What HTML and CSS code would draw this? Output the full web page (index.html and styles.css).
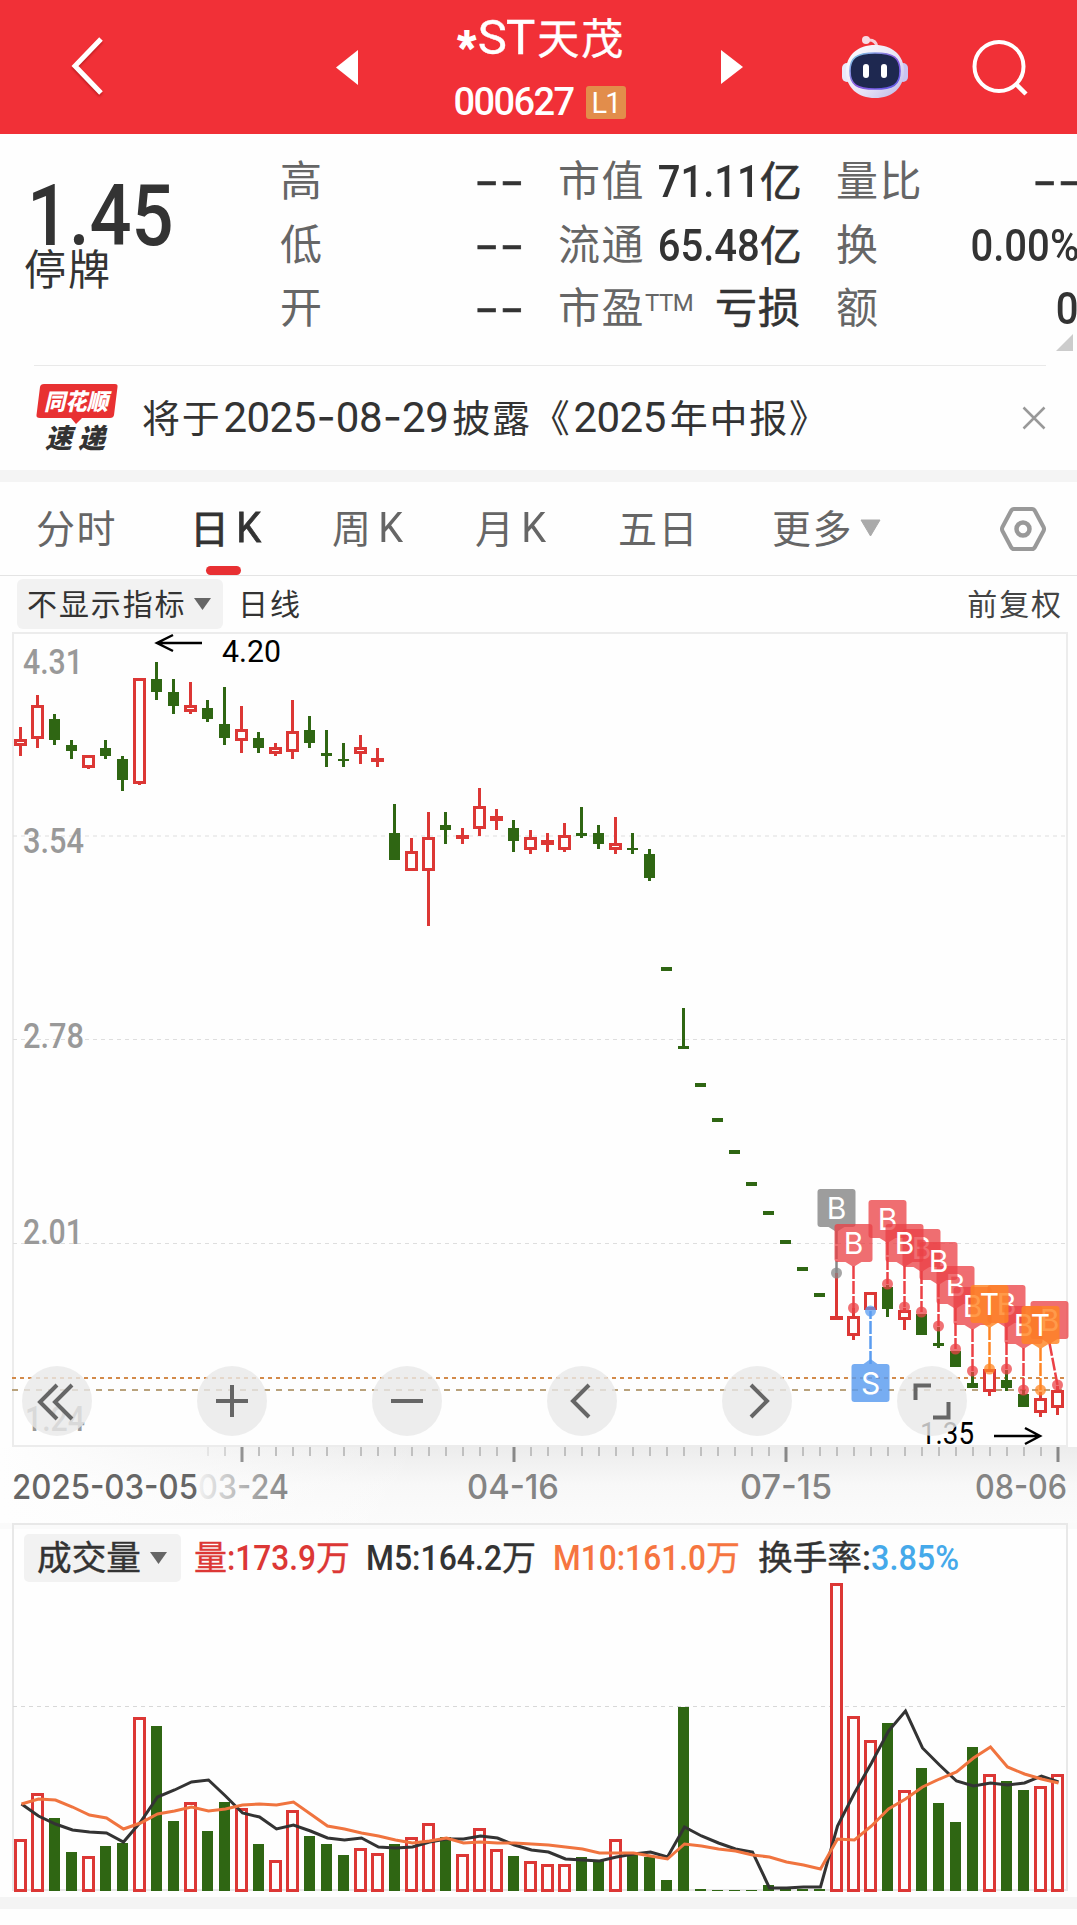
FILE: index.html
```html
<!DOCTYPE html>
<html lang="zh-CN">

<head>
    <meta charset="UTF-8">
    <meta name="viewport" content="width=device-width, initial-scale=1.0">
    <title>*ST天茂 000627</title>
    <link rel="stylesheet" href="styles.css">
</head>

<body>
    <header class="topbar">
        <svg class="back" width="34" height="62" viewBox="0 0 34 62">
            <path d="M31 3 L5 30 L31 57" fill="none" stroke="#fff" stroke-width="5" />
        </svg>
        <svg class="prev" width="22" height="36" viewBox="0 0 22 36">
            <path d="M22 0 V35 L0 17.5Z" fill="#fff" />
        </svg>
        <div class="title">
            <h1><span class="star">*</span><span class="st">ST</span>天茂</h1>
            <div class="code"><span>000627</span><b>L1</b></div>
        </div>
        <svg class="next" width="22" height="36" viewBox="0 0 22 36">
            <path d="M0 0 V34 L22 17Z" fill="#fff" />
        </svg>
        <svg class="robot" width="68" height="64" viewBox="0 0 68 64">
            <defs>
                <linearGradient id="shell" x1="0" y1="0" x2="1" y2="1">
                    <stop offset="0" stop-color="#ffffff" />
                    <stop offset=".6" stop-color="#e6e2f5" />
                    <stop offset="1" stop-color="#b9b4e4" />
                </linearGradient>
                <linearGradient id="rim" x1="0" y1="0" x2="1" y2="1">
                    <stop offset="0" stop-color="#7fd6e6" />
                    <stop offset=".5" stop-color="#8d5be0" />
                    <stop offset="1" stop-color="#5a5be8" />
                </linearGradient>
            </defs>
            <path d="M25 5 Q34 4 35 12" fill="none" stroke="#f6cfd8" stroke-width="3" />
            <circle cx="24" cy="5" r="4" fill="#f8dbe4" />
            <rect x="0" y="28" width="10" height="19" rx="5" fill="#e9e9fa" />
            <rect x="56" y="28" width="10" height="19" rx="5" fill="#c9c5f0" />
            <path d="M33 10 C50 10 62 20 62 36 C62 53 50 63 33 63 C16 63 4 53 4 36 C4 20 16 10 33 10Z" fill="url(#shell)" />
            <path d="M33 18 C52 18 58 23 58 36 C58 50 51 54 33 54 C15 54 8 50 8 36 C8 23 14 18 33 18Z" fill="#1e2850" stroke="url(#rim)" stroke-width="1.6" />
            <rect x="21" y="29" width="6" height="14" rx="3" fill="#fff" />
            <rect x="39" y="29" width="6" height="14" rx="3" fill="#fff" />
        </svg>
        <svg class="search" width="58" height="60" viewBox="0 0 58 60">
            <circle cx="27" cy="27.500" r="24.5" fill="none" stroke="#fff" stroke-width="4" />
            <path d="M44 45 L54 55" stroke="#fff" stroke-width="4.5" />
        </svg>
    </header>

    <section class="quote">
        <div class="price">
            <div class="now"><span>1.45</span></div>
            <div class="state">停牌</div>
        </div>
        <div class="cell c1"><span>高</span><b class="dash">--</b></div>
        <div class="cell c2"><span>市值</span><b><i>71.11</i>亿</b></div>
        <div class="cell c3"><span>量比</span><b class="dash">--</b></div>
        <div class="cell c1"><span>低</span><b class="dash">--</b></div>
        <div class="cell c2"><span>流通</span><b><i>65.48</i>亿</b></div>
        <div class="cell c3"><span>换</span><b><i>0.00%</i></b></div>
        <div class="cell c1"><span>开</span><b class="dash">--</b></div>
        <div class="cell c2"><span>市盈<sup>TTM</sup></span><b class="loss">亏损</b></div>
        <div class="cell c3"><span>额</span><b><i>0</i></b></div>
    </section>

    <section class="notice">
        <svg class="logo" width="84" height="70" viewBox="0 0 84 70">
            <path d="M8 1 H79 Q82 1 81.500 4 L78 32 Q77.500 35 74 35 H46 L40 41 L35 35 H4 Q0 35 .5 32 L4 4 Q4.500 1 8 1Z" fill="#e83132" />
            <text class="logo-a" x="8" y="27" textLength="64" lengthAdjust="spacingAndGlyphs">同花顺</text>
            <text class="logo-b" x="9" y="65" textLength="60">速递</text>
        </svg>
        <p>将于<span class="num">2025<i>-</i>08<i>-</i>29</span>披露《<span class="num">2025</span>年中报》</p>
        <svg class="close" width="24" height="24" viewBox="0 0 24 24">
            <path d="M1.500 1.500 L22.500 22.500 M22.500 1.500 L1.500 22.500" stroke="#999" stroke-width="2.500" />
        </svg>
    </section>

    <nav class="tabs">
        <a>分时</a>
        <a class="active">日<span>K</span></a>
        <a>周<span>K</span></a>
        <a>月<span>K</span></a>
        <a>五日</a>
        <a>更多<svg width="21" height="18" viewBox="0 0 21 18"><path d="M1 1 H20 L10.500 17Z" fill="#aaa" stroke="#aaa" stroke-linejoin="round" /></svg></a>
        <svg class="setting" width="46" height="46" viewBox="0 0 46 46">
            <path d="M14 3 H32 Q34 3 35 5 L43.500 21 Q44.500 23 43.500 25 L35 41 Q34 43 32 43 H14 Q12 43 11 41 L2.500 25 Q1.500 23 2.500 21 L11 5 Q12 3 14 3Z" fill="none" stroke="#999" stroke-width="4" />
            <circle cx="23" cy="23" r="6.500" fill="none" stroke="#999" stroke-width="4.500" />
        </svg>
    </nav>

    <div class="indicator">
        <div class="chip"><span>不显示指标</span><svg width="17" height="12" viewBox="0 0 17 12"><path d="M0 0 H17 L8.500 12Z" fill="#666" /></svg></div>
        <span class="period">日线</span>
        <span class="adjust">前复权</span>
    </div>

    <section class="kline">
        <svg id="kline" width="1077" height="891" viewBox="0 632 1077 891"></svg>
        <div class="tools">
            <button><svg viewBox="0 0 70 70"><path d="M35 19 L18 36 L35 53 M50 19 L33 36 L50 53" /></svg></button>
            <button><svg viewBox="0 0 70 70"><path d="M35 19 V51 M19 35 H51" /></svg></button>
            <button><svg viewBox="0 0 70 70"><path d="M19 35 H51" /></svg></button>
            <button><svg viewBox="0 0 70 70"><path d="M42 19 L26 35 L42 51" /></svg></button>
            <button><svg viewBox="0 0 70 70"><path d="M29 19 L45 35 L29 51" /></svg></button>
            <button><svg viewBox="0 0 70 70"><path d="M18.500 34 V19.500 H34 M36 51.500 H51.500 V36" /></svg></button>
        </div>
    </section>

    <section class="volume">
        <svg id="volume" width="1077" height="374" viewBox="0 1523 1077 374"></svg>
    </section>
    <div class="band"></div>

    <script src="script.js"></script>
</body>

</html>
```
FILE: styles.css
```css
* {
    box-sizing: border-box;
    margin: 0;
    padding: 0;
}

body {
    width: 1077px;
    height: 1925px;
    background-color: #fefefe;
    color: #333;
    font-family: Roboto, "Noto Sans CJK SC", sans-serif;
    overflow: hidden;
}

svg {
    display: block;
    flex-shrink: 0;
}

i {
    font-style: normal;
}

/* red title bar */
.topbar {
    display: flex;
    align-items: flex-start;
    height: 134px;
    background-color: #f13037;
    color: white;
    padding-left: 70px;
}

.back {
    margin-top: 36px;
    filter: drop-shadow(0 2px 1px rgba(120, 0, 0, 0.4));
}

.prev {
    margin: 50px 0 0 232px;
}

.title {
    width: 363px;
    text-align: center;
}

.title h1 {
    height: 78px;
    padding-left: 4px;
    font-size: 42px;
    line-height: 76px;
    font-weight: 400;
    letter-spacing: 2px;
    white-space: nowrap;
    -webkit-text-stroke: 0.4px white;
}

.title .star {
    font-size: 42px;
    position: relative;
    top: 7px;
    -webkit-text-stroke: 2px white;
}

.title .st {
    font-size: 49px;
    letter-spacing: -1px;
    margin-right: 3px;
}

.code {
    display: flex;
    justify-content: center;
    align-items: center;
    height: 48px;
    gap: 12px;
    font-size: 38px;
    font-weight: 500;
}

.code span {
    letter-spacing: -1.600px;
}

.code b {
    width: 40px;
    height: 33px;
    border-radius: 3px;
    background-color: #e28d4b;
    font-size: 29px;
    line-height: 34px;
    font-weight: 400;
    letter-spacing: -2px;
}

.next {
    margin-top: 50px;
}

.robot {
    margin: 35px 0 0 99px;
}

.search {
    margin: 39px 0 0 62px;
}

/* quote numbers */
.quote {
    position: relative;
    display: grid;
    grid-template-columns: 280px 241px 280px 276px;
    grid-template-rows: repeat(3, 63.500px);
    height: 232px;
    padding-top: 16px;
    font-size: 42px;
    line-height: 63px;
}

.quote::before {
    content: "";
    position: absolute;
    left: 34px;
    right: 31px;
    bottom: 0;
    height: 1px;
    background-color: #e9e9e9;
}

.quote::after {
    content: "";
    position: absolute;
    right: 4px;
    top: 200px;
    border-left: 17px solid transparent;
    border-bottom: 17px solid #ccc;
}

.price {
    grid-row: 1 / 4;
    padding: 20px 0 0 24px;
}

.now {
    height: 76px;
    font-size: 86px;
    line-height: 92px;
    font-weight: 500;
    padding-left: 3px;
}

.now span {
    display: inline-block;
    transform: scaleX(0.86);
    transform-origin: left;
}

.state {
    line-height: 49px;
    letter-spacing: 2px;
}

.cell {
    display: flex;
    justify-content: space-between;
    white-space: nowrap;
}

.c2 {
    padding-left: 37px;
}

.c3 {
    padding-left: 35px;
    margin-right: -2px;
}

.cell span {
    color: #666;
    letter-spacing: 1.500px;
}

.cell b {
    font-weight: 400;
    -webkit-text-stroke: 0.6px #333;
}

.cell i {
    display: inline-block;
    font-size: 45px;
    font-weight: 500;
    transform: scaleX(0.89);
    transform-origin: right;
    -webkit-text-stroke: 0;
}

.cell .dash {
    font-family: Inter, sans-serif;
    font-size: 44px;
    transform: translateX(3px) scaleX(1.25);
    transform-origin: right;
}

.cell .loss {
    letter-spacing: 1px;
}

.cell sup {
    font-size: 24px;
    line-height: 1;
    letter-spacing: -0.500px;
    vertical-align: 12px;
}

/* news line */
.notice {
    display: flex;
    align-items: center;
    height: 104px;
    padding: 0 31px 0 36px;
}

.logo-a {
    fill: white;
    font: italic 900 23px "Noto Sans CJK SC", sans-serif;
}

.logo-b {
    fill: #333;
    font: italic 900 27px "Noto Sans CJK SC", sans-serif;
}

.notice p {
    flex: 1;
    margin: -6px 0 0 22px;
    font-size: 38px;
    letter-spacing: 1.700px;
    white-space: nowrap;
}

.num {
    font-size: 42px;
    letter-spacing: -0.500px;
    margin: 0 4px 0 2px;
}

.num i {
    display: inline-block;
    width: 20px;
    text-align: center;
    font-family: Inter, sans-serif;
}

.tabs {
    display: grid;
    grid-template-columns: 154px 142px 143px 143px 154px 228px 46px;
    align-items: center;
    height: 106px;
    padding-left: 36px;
    border-top: 12px solid #f4f4f4;
    border-bottom: 1px solid #e4e4e4;
    font-size: 39px;
    color: #666;
}

.tabs a {
    position: relative;
    display: flex;
    align-items: center;
    letter-spacing: 1.500px;
    padding-bottom: 6px;
}

.tabs a span {
    margin: 2px 0 0 4px;
    font-size: 43px;
    transform: scaleX(0.92);
}

.tabs a svg {
    margin: 4px 0 0 7px;
}

.tabs .active {
    color: #333;
    -webkit-text-stroke: 0.8px #333;
}

.tabs .active::after {
    content: "";
    position: absolute;
    left: 16px;
    bottom: -15px;
    width: 35px;
    height: 9px;
    border-radius: 5px;
    background-color: #e83033;
}

.indicator {
    display: flex;
    align-items: center;
    height: 56px;
    padding: 0 14px 0 17px;
    font-size: 30px;
    letter-spacing: 1.900px;
}

.indicator span {
    padding-bottom: 5px;
}

.chip {
    display: flex;
    align-items: center;
    justify-content: space-between;
    width: 206px;
    height: 50px;
    padding: 0 12px 0 10px;
    border-radius: 6px;
    background-color: #f2f2f2;
}

.period {
    margin-left: 15px;
}

.adjust {
    margin-left: auto;
    color: #444;
}

/* charts */
.kline {
    position: relative;
    height: 891px;
}

.tools {
    position: absolute;
    left: 22px;
    top: 734px;
    display: flex;
    gap: 105px;
}

.tools button {
    width: 70px;
    height: 70px;
    border: none;
    border-radius: 50%;
    background-color: rgba(233, 233, 233, 0.8);
}

.tools path {
    fill: none;
    stroke: #666;
    stroke-width: 4;
}

.ylabel {
    font: 500 35px Roboto, sans-serif;
    fill: #999;
}

.mark {
    font: 32px Roboto, sans-serif;
    fill: black;
}

.date {
    font: 500 34px Inter, sans-serif;
    fill: #848484;
}

.date.first {
    fill: #666;
}

.tag {
    font: 30px Inter, sans-serif;
    fill: white;
    text-anchor: middle;
}

.legend {
    font: 500 35px Roboto, sans-serif;
}

.legend.cn {
    font: 34px "Noto Sans CJK SC", sans-serif;
    stroke-width: 0.4px;
}

.volume {
    height: 374px;
}

.band {
    height: 12px;
    background-color: #f4f4f4;
}
```
FILE: script.js
```
var RED = '#dc3735';
var GREEN = '#2f6613';

// [up, high, bodyTop, bodyBottom, low, volumeTop, m5, m10]
var days = [
    [1, 727, 739, 746, 756, 1839, 1804, 1804],
    [1, 695, 705, 739, 748, 1793, 1816, 1799],
    [0, 714, 719, 740, 745, 1818, 1824, 1800],
    [0, 740, 745, 751, 759, 1852, 1830, 1807],
    [1, 755, 755, 768, 769, 1856, 1832, 1815],
    [0, 740, 748, 756, 759, 1846, 1833, 1818],
    [0, 756, 759, 780, 791, 1843, 1842, 1829],
    [1, 678, 678, 784, 785, 1717, 1822, 1823],
    [0, 662, 679, 692, 700, 1726, 1797, 1814],
    [0, 679, 692, 706, 714, 1821, 1790, 1811],
    [1, 682, 705, 712, 714, 1802, 1782, 1807],
    [0, 700, 708, 719, 722, 1831, 1780, 1811],
    [0, 687, 724, 738, 745, 1802, 1796, 1809],
    [1, 706, 729, 741, 753, 1808, 1813, 1805],
    [0, 732, 738, 748, 753, 1844, 1817, 1804],
    [1, 743, 747, 754, 756, 1860, 1829, 1805],
    [1, 700, 731, 752, 759, 1810, 1825, 1802],
    [0, 716, 730, 743, 748, 1836, 1831, 1814],
    [0, 730, 753, 756, 767, 1844, 1838, 1826],
    [0, 743, 759, 761, 767, 1855, 1840, 1829],
    [1, 735, 747, 754, 764, 1848, 1838, 1833],
    [1, 748, 758, 762, 767, 1853, 1847, 1836],
    [0, 804, 833, 860, 860, 1844, 1848, 1840],
    [1, 838, 851, 871, 871, 1837, 1847, 1843],
    [1, 812, 837, 871, 926, 1823, 1842, 1841],
    [0, 812, 825, 830, 844, 1837, 1839, 1838],
    [1, 828, 835, 839, 844, 1854, 1839, 1843],
    [1, 788, 806, 829, 836, 1828, 1836, 1842],
    [1, 809, 816, 821, 830, 1849, 1838, 1843],
    [0, 820, 828, 841, 852, 1856, 1845, 1843],
    [1, 830, 837, 850, 854, 1861, 1850, 1844],
    [1, 833, 840, 845, 852, 1864, 1852, 1845],
    [1, 823, 835, 850, 852, 1864, 1859, 1847],
    [0, 807, 833, 836, 838, 1857, 1860, 1849],
    [0, 825, 833, 844, 849, 1861, 1861, 1853],
    [1, 817, 843, 850, 854, 1839, 1857, 1853],
    [0, 833, 848, 850, 854, 1853, 1854, 1853],
    [0, 849, 854, 878, 881, 1857, 1852, 1856],
    [0, 967, 967, 971, 971, 1880, 1857, 1859],
    [0, 1008, 1046, 1049, 1049, 1707, 1827, 1844],
    [0, 1083, 1083, 1087, 1087, 1889, 1836, 1846],
    [0, 1118, 1118, 1122, 1122, 1890, 1843, 1849],
    [0, 1150, 1150, 1154, 1154, 1890, 1849, 1851],
    [0, 1182, 1182, 1186, 1186, 1890, 1852, 1855],
    [0, 1211, 1211, 1215, 1215, 1885, 1888, 1857],
    [0, 1240, 1240, 1244, 1244, 1889, 1888, 1862],
    [0, 1267, 1267, 1271, 1271, 1889, 1887, 1865],
    [0, 1293, 1293, 1297, 1297, 1889, 1887, 1869],
    [1, 1273, 1316, 1320, 1320, 1583, 1826, 1839],
    [1, 1308, 1316, 1336, 1340, 1716, 1793, 1840],
    [1, 1292, 1292, 1310, 1310, 1740, 1763, 1826],
    [0, 1285, 1287, 1309, 1317, 1723, 1731, 1809],
    [1, 1308, 1310, 1320, 1330, 1790, 1711, 1799],
    [0, 1314, 1314, 1335, 1335, 1768, 1748, 1787],
    [0, 1327, 1343, 1346, 1348, 1803, 1765, 1779],
    [0, 1351, 1351, 1367, 1367, 1822, 1781, 1772],
    [0, 1372, 1383, 1388, 1388, 1747, 1786, 1758],
    [1, 1369, 1369, 1392, 1396, 1774, 1783, 1747],
    [0, 1370, 1380, 1388, 1391, 1781, 1785, 1767],
    [0, 1390, 1394, 1407, 1407, 1790, 1783, 1774],
    [1, 1392, 1398, 1413, 1417, 1786, 1776, 1779],
    [1, 1386, 1390, 1408, 1415, 1774, 1782, 1783]
];

// trade tags: [day, letter, boxTop, dotY, color], lower ones first
var tags = [
    [48, 'B', 1189, 1273, '#888888'],
    [58, 'B', 1285, 1369, '#eb4146'],
    [61, 'B', 1301, 1385, '#eb4146'],
    [53, 'B', 1229, 1312, '#eb4146'],
    [51, 'B', 1200, 1284, '#eb4146'],
    [49, 'B', 1224, 1308, '#eb4146'],
    [55, 'B', 1266, 1349, '#eb4146'],
    [56, 'B', 1287, 1371, '#eb4146'],
    [59, 'B', 1306, 1390, '#eb4146'],
    [52, 'B', 1224, 1307, '#eb4146'],
    [54, 'B', 1242, 1326, '#eb4146'],
    [57, 'T', 1285, 1369, '#ff8523'],
    [60, 'T', 1306, 1390, '#ff8523'],
    [50, 'S', 1364, 1311, '#5a9cf0']
];

function cx(i) {
    return 20.5 + 17 * i;
}

function rect(x, y, w, h, fill, more) {
    return '<rect x="' + x + '" y="' + y + '" width="' + w + '" height="' + h + '" fill="' + fill + '" ' + (more || '') + '/>';
}

function line(x1, y1, x2, y2, color, width, more) {
    return '<line x1="' + x1 + '" y1="' + y1 + '" x2="' + x2 + '" y2="' + y2 + '" stroke="' + color + '" stroke-width="' + width + '" ' + (more || '') + '/>';
}

function text(x, y, cls, str, width, more) {
    return '<text x="' + x + '" y="' + y + '" class="' + cls + '" ' +
        (width ? 'textLength="' + width + '" lengthAdjust="spacingAndGlyphs" ' : '') + (more || '') + '>' + str + '</text>';
}

function hollow(x, top, bottom) {
    return '<rect x="' + (x - 5) + '" y="' + (top + 1.5) + '" width="10" height="' + Math.max(bottom - top - 3, 1) +
        '" fill="#fefefe" stroke="' + RED + '" stroke-width="3"/>';
}

function drawKline() {
    var s = '';

    // date axis background
    s += '<defs><linearGradient id="axis" x1="0" y1="0" x2="0" y2="1"><stop offset="0" stop-color="#ececec"/>' +
        '<stop offset=".5" stop-color="#f8f8f8"/><stop offset="1" stop-color="#fbfbfb"/></linearGradient>' +
        '<linearGradient id="fade" x1="0" y1="0" x2="1" y2="0"><stop offset="0" stop-color="#fefefe"/>' +
        '<stop offset="1" stop-color="#fefefe" stop-opacity="0"/></linearGradient>' +
        '<linearGradient id="fadeText" x1="0" y1="0" x2="1" y2="0"><stop offset="0" stop-color="#f2f2f2"/>' +
        '<stop offset=".6" stop-color="#a8a8a8"/><stop offset="1" stop-color="#848484"/></linearGradient></defs>';
    s += rect(0, 1447, 1077, 76, 'url(#axis)');
    s += rect(0, 1447, 420, 76, 'url(#fade)');
    for (var i = 0; i <= 50; i++) {
        var tx = 208 + 17 * i;
        var major = (i - 2) % 16 === 0;
        s += line(tx, 1447, tx, major ? 1462 : 1456, major ? '#888' : '#c0c0c0', major ? 3 : 2, i < 3 ? 'opacity="' + (0.3 + i * 0.3) + '"' : '');
    }

    // frame and grid
    s += '<rect x="13" y="633" width="1054" height="813" fill="none" stroke="#ececec" stroke-width="2"/>';
    [836, 1039.5, 1243.5].forEach(function (y) {
        s += line(13, y, 1067, y, '#dedede', 1, 'stroke-dasharray="4 4"');
    });
    s += line(12, 1378, 1067, 1378, '#d38a4a', 2, 'stroke-dasharray="4 4"');
    s += line(12, 1390, 1067, 1390, '#b9a27c', 2, 'stroke-dasharray="6 6"');
    s += text(23, 674, 'ylabel', '4.31', 60);
    s += text(23, 853, 'ylabel', '3.54', 61);
    s += text(23, 1048, 'ylabel', '2.78', 61);
    s += text(23, 1244, 'ylabel', '2.01', 60);
    s += text(25, 1431, 'ylabel', '1.24', 60);

    days.forEach(function (d, n) {
        var x = cx(n);
        s += rect(x - 1.5, d[1], 3, d[4] - d[1], d[0] ? RED : GREEN);
        s += d[0] ? hollow(x, d[2], d[3]) : rect(x - 5.5, d[2], 11, d[3] - d[2], GREEN);
    });

    // high and low marks
    s += '<path d="M202 643 H157 M173 635 L157 643 L173 651" fill="none" stroke="#000" stroke-width="2.500"/>';
    s += text(222, 662, 'mark', '4.20', 59);
    s += text(920, 1444, 'mark', '1.35', 54);
    s += '<path d="M994 1436 H1040 M1025 1428 L1040 1436 L1025 1444" fill="none" stroke="#000" stroke-width="2.500"/>';

    // stems first so the boxes cover them
    tags.forEach(function (t) {
        var x = cx(t[0]);
        var start = t[1] === 'S' ? t[2] : t[2] + 42;
        s += line(t[0] === 61 ? x - 8 : x, start, x, t[3], t[4], 2.5, 'stroke-dasharray="13 2"');
        s += '<circle cx="' + x + '" cy="' + t[3] + '" r="5.500" fill="' + t[4] + '" opacity=".75"/>';
    });
    tags.forEach(function (t) {
        var x = cx(t[0]) - (t[0] === 61 ? 8 : 0);
        var y = t[2];
        s += '<g opacity="' + (t[1] === 'B' && t[0] !== 48 ? 0.76 : 0.82) + '">' + rect(x - 19, y, 38, 38, t[4], 'rx="3"');
        s += t[1] === 'S'
            ? '<path d="M' + (x - 7) + ' ' + y + ' L' + x + ' ' + (y - 5) + ' L' + (x + 7) + ' ' + y + 'Z" fill="' + t[4] + '"/>'
            : '<path d="M' + (x - 8) + ' ' + (y + 38) + ' L' + x + ' ' + (y + 43) + ' L' + (x + 8) + ' ' + (y + 38) + 'Z" fill="' + t[4] + '"/>';
        s += '</g>' + text(x, y + 30, 'tag', t[1]);
    });

    s += text(198, 1499, 'date', '03-24', 91, 'style="fill:url(#fadeText)"');
    s += text(12, 1499, 'date first', '2025-03-05', 186);
    s += text(467, 1499, 'date', '04-16', 92);
    s += text(740, 1499, 'date', '07-15', 92);
    s += text(975, 1499, 'date', '08-06', 92);
    document.getElementById('kline').innerHTML = s;
}

function drawVolume() {
    var s = '';
    s += rect(0, 1523, 1077, 6, '#fafafa');
    s += '<rect x="13" y="1524" width="1054" height="366" fill="none" stroke="#e8e8e8" stroke-width="2"/>';
    s += line(13, 1706.5, 1067, 1706.5, '#d8d8d8', 1, 'stroke-dasharray="4 4"');

    s += rect(24, 1534, 157, 48, '#f2f2f2', 'rx="5"');
    s += text(37, 1570, 'legend cn', '成交量', 104, 'fill="#333" stroke="#333"');
    s += '<path d="M150 1552 H167 L158.500 1564Z" fill="#666"/>';
    s += text(194, 1570, 'legend cn', '量', 33, 'fill="#dc3735" stroke="#dc3735"');
    s += text(227, 1570, 'legend', ':173.9', 89, 'fill="#dc3735"');
    s += text(316, 1570, 'legend cn', '万', 34, 'fill="#dc3735" stroke="#dc3735"');
    s += text(366, 1570, 'legend', 'M5:164.2', 136, 'fill="#333"');
    s += text(502, 1570, 'legend cn', '万', 34, 'fill="#333" stroke="#333"');
    s += text(553, 1570, 'legend', 'M10:161.0', 153, 'fill="#f67540"');
    s += text(706, 1570, 'legend cn', '万', 34, 'fill="#f67540" stroke="#f67540"');
    s += text(758, 1570, 'legend cn', '换手率', 104, 'fill="#333" stroke="#333"');
    s += text(862, 1570, 'legend', ':', 9, 'fill="#333"');
    s += text(871, 1570, 'legend', '3.85%', 88, 'fill="#45a9ea"');

    var m5 = [];
    var m10 = [];
    days.forEach(function (d, n) {
        var x = cx(n);
        s += d[0] ? hollow(x, d[5], 1892) : rect(x - 5.5, d[5], 11, 1891 - d[5], GREEN);
        m5.push((x + 1) + ',' + d[6]);
        m10.push((x + 1) + ',' + d[7]);
    });
    s += '<polyline points="' + m5.join(' ') + '" fill="none" stroke="#333" stroke-width="3"/>';
    s += '<polyline points="' + m10.join(' ') + '" fill="none" stroke="#f0743f" stroke-width="3"/>';
    document.getElementById('volume').innerHTML = s;
}

drawKline();
drawVolume();
```
